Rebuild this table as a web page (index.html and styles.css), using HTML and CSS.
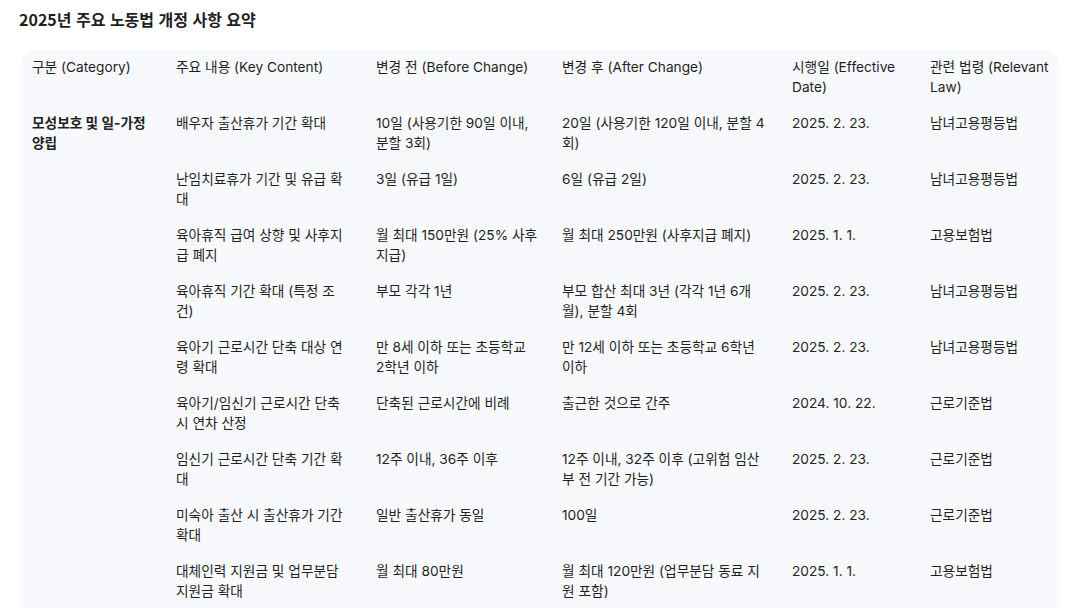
FILE: index.html
```html
<!DOCTYPE html>
<html lang="ko">
<head>
<meta charset="utf-8">
<title>2025년 주요 노동법 개정 사항 요약</title>
<link rel="stylesheet" href="styles.css">
</head>
<body>
<main class="page">
  <h1 class="title">2025년 주요 노동법 개정 사항 요약</h1>
  <div class="table-wrap">
    <table class="summary">
      <colgroup>
        <col class="c-cat">
        <col class="c-key">
        <col class="c-before">
        <col class="c-after">
        <col class="c-date">
        <col class="c-law">
      </colgroup>
      <thead>
        <tr>
          <th>구분 (Category)</th>
          <th>주요 내용 (Key Content)</th>
          <th>변경 전 (Before Change)</th>
          <th>변경 후 (After Change)</th>
          <th>시행일 (Effective Date)</th>
          <th>관련 법령 (Relevant Law)</th>
        </tr>
      </thead>
      <tbody>
        <tr>
          <td class="cat">모성보호 및 일-가정 양립</td>
          <td>배우자 출산휴가 기간 확대</td>
          <td>10일 (사용기한 90일 이내, 분할 3회)</td>
          <td>20일 (사용기한 120일 이내, 분할 4회)</td>
          <td>2025. 2. 23.</td>
          <td>남녀고용평등법</td>
        </tr>
        <tr>
          <td></td>
          <td>난임치료휴가 기간 및 유급 확대</td>
          <td>3일 (유급 1일)</td>
          <td>6일 (유급 2일)</td>
          <td>2025. 2. 23.</td>
          <td>남녀고용평등법</td>
        </tr>
        <tr>
          <td></td>
          <td>육아휴직 급여 상향 및 사후지급 폐지</td>
          <td>월 최대 150만원 (25% 사후지급)</td>
          <td>월 최대 250만원 (사후지급 폐지)</td>
          <td>2025. 1. 1.</td>
          <td>고용보험법</td>
        </tr>
        <tr>
          <td></td>
          <td>육아휴직 기간 확대 (특정 조건)</td>
          <td>부모 각각 1년</td>
          <td>부모 합산 최대 3년 (각각 1년 6개월), 분할 4회</td>
          <td>2025. 2. 23.</td>
          <td>남녀고용평등법</td>
        </tr>
        <tr>
          <td></td>
          <td>육아기 근로시간 단축 대상 연령 확대</td>
          <td>만 8세 이하 또는 초등학교 <span class="keep">2학년</span> 이하</td>
          <td>만 12세 이하 또는 초등학교 6학년 이하</td>
          <td>2025. 2. 23.</td>
          <td>남녀고용평등법</td>
        </tr>
        <tr>
          <td></td>
          <td>육아기/임신기 근로시간 단축 시 연차 산정</td>
          <td>단축된 근로시간에 비례</td>
          <td>출근한 것으로 간주</td>
          <td>2024. 10. 22.</td>
          <td>근로기준법</td>
        </tr>
        <tr>
          <td></td>
          <td>임신기 근로시간 단축 기간 확대</td>
          <td>12주 이내, 36주 이후</td>
          <td>12주 이내, 32주 이후 (고위험 임산부 전 기간 가능)</td>
          <td>2025. 2. 23.</td>
          <td>근로기준법</td>
        </tr>
        <tr>
          <td></td>
          <td>미숙아 출산 시 출산휴가 기간 확대</td>
          <td>일반 출산휴가 동일</td>
          <td>100일</td>
          <td>2025. 2. 23.</td>
          <td>근로기준법</td>
        </tr>
        <tr>
          <td></td>
          <td>대체인력 지원금 및 업무분담 지원금 확대</td>
          <td>월 최대 80만원</td>
          <td>월 최대 120만원 (업무분담 동료 지원 포함)</td>
          <td>2025. 1. 1.</td>
          <td>고용보험법</td>
        </tr>
      </tbody>
    </table>
  </div>
</main>
</body>
</html>
```
FILE: styles.css
```css
* {
  box-sizing: border-box;
}

html, body {
  margin: 0;
  padding: 0;
  background: #ffffff;
}

body {
  font-family: Inter, "Noto Sans CJK KR", sans-serif;
  color: #1f1f1f;
}

.page {
  padding: 7px 28px 24px 19px;
}

.title {
  margin: 0;
  font-family: "Noto Sans CJK KR", sans-serif;
  font-size: 16px;
  font-weight: 700;
  line-height: 24px;
  color: #1f1f1f;
}

.table-wrap {
  margin-top: 19px;
  margin-left: 1px;
  width: 1040px;
  padding-bottom: 16px;
  background: #f8f9fc;
  border-radius: 16px;
  overflow: hidden;
}

.summary {
  width: 100%;
  border-collapse: collapse;
  table-layout: fixed;
}

.c-cat { width: 144px; }
.c-key { width: 200px; }
.c-before { width: 186px; }
.c-after { width: 230px; }
.c-date { width: 138px; }
.c-law { width: 142px; }

.summary th,
.summary td {
  padding: 8px 12px;
  text-align: left;
  vertical-align: top;
  font-size: 13.7px;
  line-height: 20px;
  font-weight: 400;
  color: #1f1f1f;
}

.summary th {
  padding-top: 7px;
}

.summary th:nth-child(3),
.summary td:nth-child(3) {
  padding-right: 8px;
}

.summary th:last-child,
.summary td:last-child {
  padding-right: 4px;
}

.summary td.cat {
  font-weight: 700;
}

.keep {
  white-space: nowrap;
}
```
